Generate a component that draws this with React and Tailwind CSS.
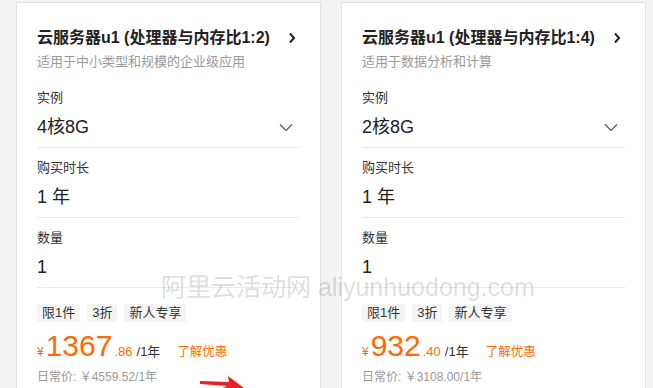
import React from 'react'

const cards = [
  {
    title: '云服务器u1 (处理器与内存比1:2)',
    desc: '适用于中小类型和规模的企业级应用',
    spec: '4核8G',
    price: '1367',
    cents: '.86',
    normal: '日常价: ￥4559.52/1年',
  },
  {
    title: '云服务器u1 (处理器与内存比1:4)',
    desc: '适用于数据分析和计算',
    spec: '2核8G',
    price: '932',
    cents: '.40',
    normal: '日常价: ￥3108.00/1年',
  },
]

function ChevronRight() {
  return (
    <svg width="8" height="12" viewBox="0 0 8 12" className="mr-[4px]">
      <path d="M2 1.5l4 4.5-4 4.5" fill="none" stroke="#222" strokeWidth="2" />
    </svg>
  )
}

function ChevronDown() {
  return (
    <svg width="14" height="9" viewBox="0 0 14 9" className="mr-[7px]">
      <path d="M1 1.5l6 6 6-6" fill="none" stroke="#555" strokeWidth="1.2" />
    </svg>
  )
}

function Field({ label, value, icon, first }) {
  return (
    <div className={`${first ? 'pt-[16px]' : 'border-t border-[#ebebeb] pt-[10px]'} pb-[6px]`}>
      <div className="text-[13px] leading-[20px] text-[#333]">{label}</div>
      <div className="mt-[5px] flex h-[28px] items-center justify-between">
        <span className="text-[18px] leading-[28px] text-[#222]">{value}</span>
        {icon}
      </div>
    </div>
  )
}

function Card({ c }) {
  return (
    <div className="h-[400px] w-[305px] shrink-0 border border-[#e2e2e2] bg-white px-[20px] pt-[23px]">
      <div className="flex h-[24px] items-center justify-between">
        <span className="text-[16px] font-bold leading-[24px] text-[#222]">{c.title}</span>
        <ChevronRight />
      </div>
      <div className="mt-[2px] text-[13px] leading-[20px] text-[#999]">{c.desc}</div>
      <Field first label="实例" value={c.spec} icon={<ChevronDown />} />
      <Field label="购买时长" value="1 年" />
      <Field label="数量" value="1" />
      <div className="border-t border-[#ebebeb] pt-[16px]">
        <div className="flex gap-[7px]">
          {['限1件', '3折', '新人专享'].map((t) => (
            <span key={t} className="h-[18px] bg-[#f5f5f5] px-[5px] text-[13px] leading-[18px] text-[#333]">{t}</span>
          ))}
        </div>
        <div className="mt-[8px] flex h-[32px] items-baseline text-[#ff6a00]">
          <span className="mr-[2px] text-[12px]">¥</span>
          <span className="text-[30px] leading-[32px]">{c.price}</span>
          <span className="ml-[2px] text-[13px]">{c.cents}</span>
          <span className="ml-[4px] text-[13px] text-[#333]">/1年</span>
          <span className="ml-[17px] text-[12.5px]">了解优惠</span>
        </div>
        <div className="mt-[6px] text-[12px] leading-[18px] text-[#999]">{c.normal}</div>
      </div>
    </div>
  )
}

export default function App() {
  return (
    <div className="relative h-[388px] w-[653px] overflow-hidden bg-[#f3f3f3] font-['Liberation_Sans','Noto_Sans_CJK_SC',sans-serif]">
      <div className="flex gap-[20px] pl-[16px] pt-[2px]">
        {cards.map((c) => <Card key={c.title} c={c} />)}
      </div>
      <div className="pointer-events-none absolute left-[161px] top-[272px] whitespace-nowrap text-[25px] leading-[30px] text-black/15">
        阿里云活动网 aliyunhuodong.com
      </div>
      <svg className="absolute left-[198px] top-[372px]" width="48" height="16" viewBox="0 0 48 16">
        <polygon points="2,9 31,10 30,4 46,16 24,16 29,14 2,12" fill="#e8202a" />
      </svg>
    </div>
  )
}
